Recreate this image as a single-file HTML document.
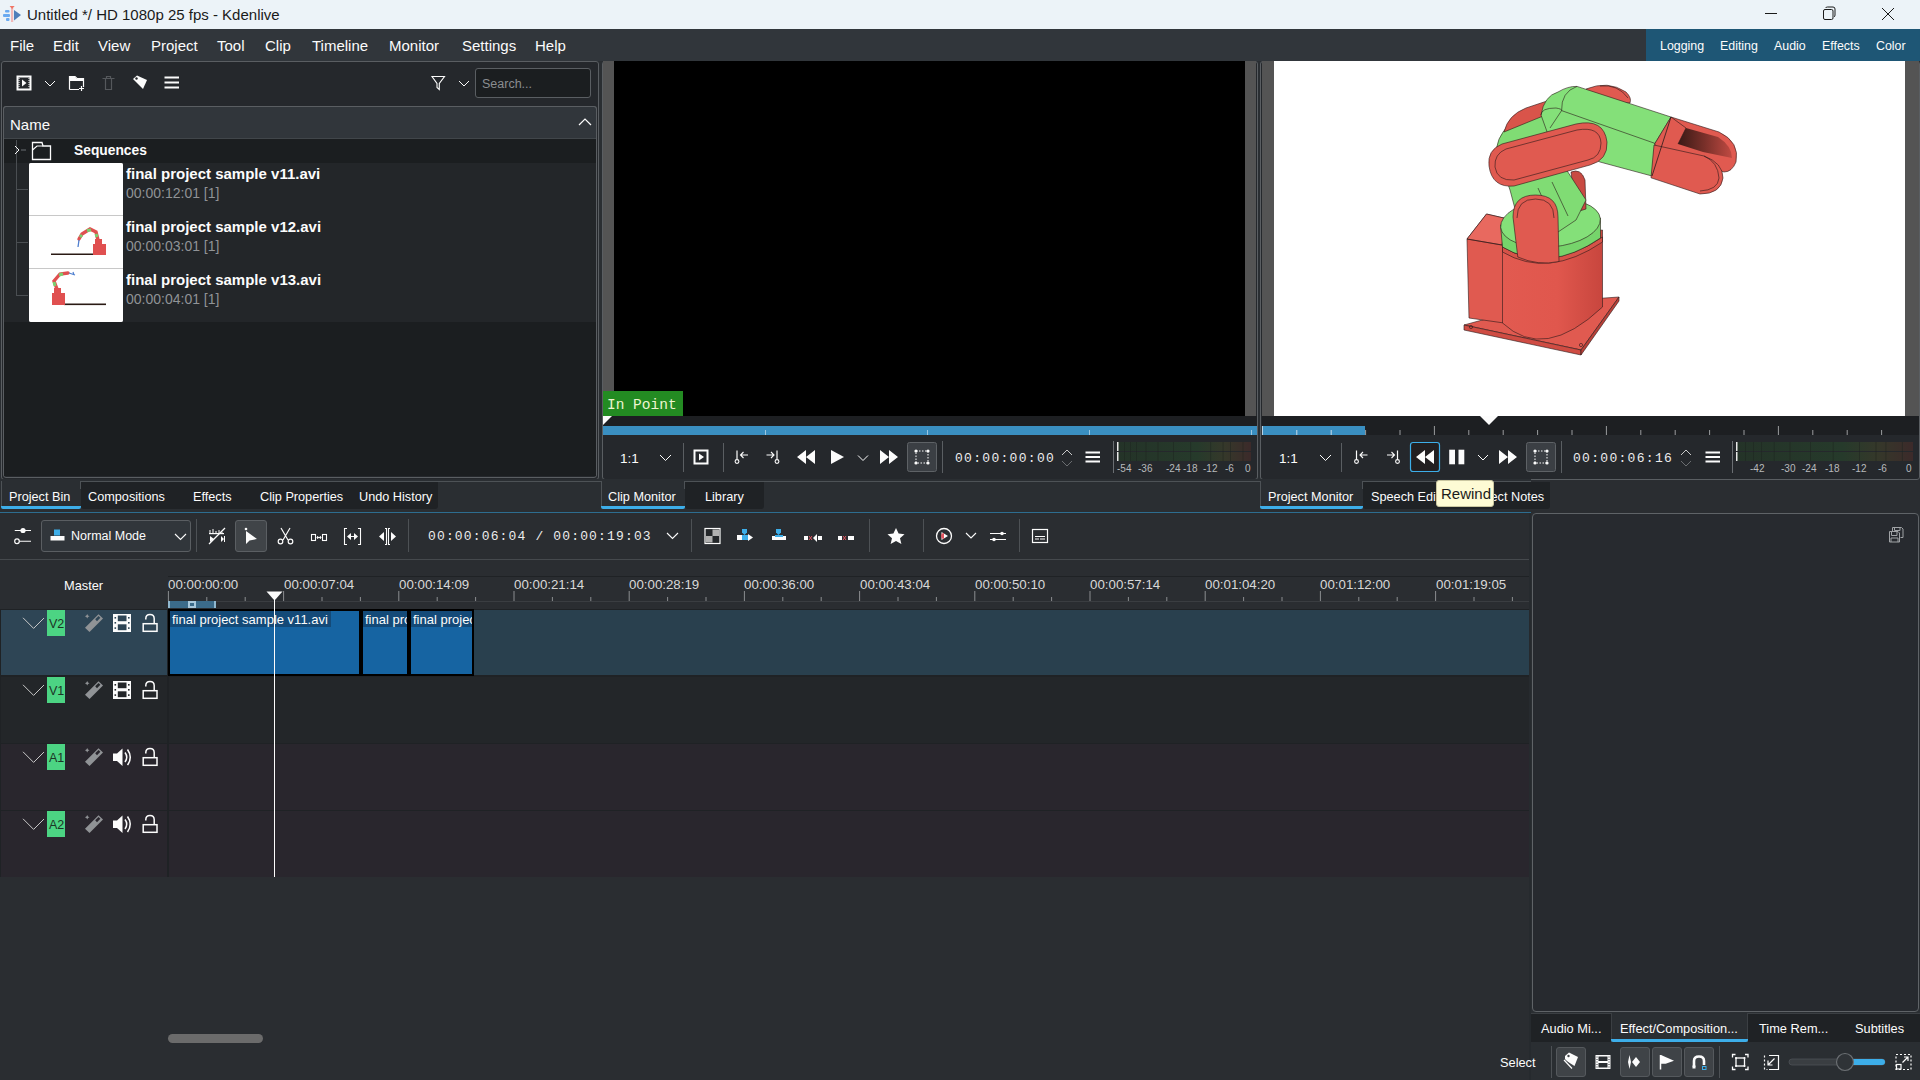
<!DOCTYPE html>
<html><head><meta charset="utf-8">
<style>
*{margin:0;padding:0;box-sizing:border-box}
html,body{width:1920px;height:1080px;overflow:hidden;background:#2a2d31;font-family:"Liberation Sans",sans-serif;color:#fcfcfc}
.a{position:absolute}
.t{position:absolute;white-space:nowrap;line-height:1}
svg{position:absolute;overflow:visible}
</style></head><body>
<div class="a" style="left:0px;top:0px;width:1920px;height:29px;background:#ecf3f8"></div>
<svg style="left:3px;top:5px;" width="20" height="19" viewBox="0 0 20 19"><rect x="2" y="5" width="4.5" height="2.6" rx="1" fill="#6aaaf0"/><rect x="0" y="9" width="7" height="3" rx="1" fill="#6aaaf0"/><rect x="3" y="13" width="3.5" height="3" rx="1" fill="#6aaaf0"/>
<path d="M11 5 L18 10 L11 15.5Z" fill="#4f7fba"/><rect x="8" y="3" width="2.2" height="14" fill="#f0b8b8"/><path d="M6.6 1 L11.6 1 L9.1 4Z" fill="#f07565"/></svg>
<div class="t" style="left:27px;top:7px;font-size:15px;color:#1a1a1a;">Untitled */ HD 1080p 25 fps - Kdenlive</div>
<svg style="left:1760px;top:0px;" width="140" height="29" viewBox="0 0 140 29"><line x1="5" y1="13.5" x2="17" y2="13.5" stroke="#1a1a1a" stroke-width="1"/>
<rect x="63.5" y="9.5" width="9.5" height="10" rx="1.5" fill="none" stroke="#1a1a1a" stroke-width="1"/>
<path d="M65.5 8 Q66 7 67.5 7 L73 7 Q75 7 75 9 L75 15 Q75 16.5 74 17" fill="none" stroke="#1a1a1a" stroke-width="1"/>
<path d="M122 8 L134 20 M134 8 L122 20" stroke="#1a1a1a" stroke-width="1"/></svg>
<div class="a" style="left:0px;top:29px;width:1920px;height:32px;background:#31363b"></div>
<div class="t" style="left:10px;top:38px;font-size:15px;color:#fcfcfc;">File</div>
<div class="t" style="left:53px;top:38px;font-size:15px;color:#fcfcfc;">Edit</div>
<div class="t" style="left:98px;top:38px;font-size:15px;color:#fcfcfc;">View</div>
<div class="t" style="left:151px;top:38px;font-size:15px;color:#fcfcfc;">Project</div>
<div class="t" style="left:217px;top:38px;font-size:15px;color:#fcfcfc;">Tool</div>
<div class="t" style="left:265px;top:38px;font-size:15px;color:#fcfcfc;">Clip</div>
<div class="t" style="left:312px;top:38px;font-size:15px;color:#fcfcfc;">Timeline</div>
<div class="t" style="left:389px;top:38px;font-size:15px;color:#fcfcfc;">Monitor</div>
<div class="t" style="left:462px;top:38px;font-size:15px;color:#fcfcfc;">Settings</div>
<div class="t" style="left:535px;top:38px;font-size:15px;color:#fcfcfc;">Help</div>
<div class="a" style="left:1646px;top:29px;width:274px;height:32px;background:#1e5675"></div>
<div class="t" style="left:1660px;top:40px;font-size:12.4px;color:#fcfcfc;">Logging</div>
<div class="t" style="left:1720px;top:40px;font-size:12.4px;color:#fcfcfc;">Editing</div>
<div class="t" style="left:1774px;top:40px;font-size:12.4px;color:#fcfcfc;">Audio</div>
<div class="t" style="left:1822px;top:40px;font-size:12.4px;color:#fcfcfc;">Effects</div>
<div class="t" style="left:1876px;top:40px;font-size:12.4px;color:#fcfcfc;">Color</div>
<div class="a" style="left:0px;top:61px;width:602px;height:418px;background:#2a2e32"></div>
<div class="a" style="left:1px;top:61px;width:598px;height:419px;background:#25282c;border:1px solid #5a5e62;border-radius:3px"></div>
<svg style="left:16px;top:75px;" width="170" height="16" viewBox="0 0 170 16">
<rect x="1.5" y="1.5" width="13" height="13" fill="none" stroke="#fcfcfc" stroke-width="2"/>
<path d="M3 3 v10 M13 3 v10" stroke="#fcfcfc" stroke-width="1" stroke-dasharray="1 1"/>
<path d="M6 4.5 L10.5 8 L6 11.5Z" fill="#fcfcfc"/>
<path d="M29 6 L34 11 L39 6" fill="none" stroke="#fcfcfc" stroke-width="1"/>
<path d="M53.5 14.5 V1.5 H59 L61 3.5 H67.5 V12" fill="none" stroke="#fcfcfc" stroke-width="1.2"/>
<path d="M53.5 5.5 H67.5 M53.5 14.5 H63" stroke="#fcfcfc" stroke-width="1.2"/><path d="M54 2 h5 l2 2 h6 v2 h-13z" fill="#fcfcfc"/>
<path d="M65.5 11 v5 M63 13.5 h5" stroke="#fcfcfc" stroke-width="1.2"/>
<path d="M86.5 3.5 H98.5 M89.5 3.5 V14.5 H95.5 V3.5 M90.5 3.5 V1.5 H94.5 V3.5" fill="none" stroke="#55585c" stroke-width="1.2"/>
<path d="M117 4 L121 0.5 L131 5 L127 14 Z" fill="#fcfcfc"/><circle cx="120.5" cy="3.5" r="1.2" fill="#232629"/><path d="M116.5 6 L124 13.5" stroke="#232629" stroke-width="1"/>
<path d="M148.5 2.5 H163 M148.5 7.5 H163 M148.5 12.5 H163" stroke="#fcfcfc" stroke-width="2"/>
</svg>
<svg style="left:430px;top:75px;" width="40" height="16" viewBox="0 0 40 16"><path d="M2 1.5 H14.5 L9.3 8.5 V14.5 L7 12.5 V8.5 Z" fill="none" stroke="#fcfcfc" stroke-width="1.1"/>
<path d="M29 6 L34 11 L39 6" fill="none" stroke="#fcfcfc" stroke-width="1"/></svg>
<div class="a" style="left:475px;top:68px;width:116px;height:30px;background:#1b1e20;border:1px solid #5a5e62;border-radius:3px"></div>
<div class="t" style="left:482px;top:78px;font-size:12.5px;color:#8a8d90;">Search...</div>
<div class="a" style="left:3px;top:106px;width:594px;height:33px;background:#31363b;border:1px solid #4d5256;border-bottom:1px solid #41464a;border-radius:3px 3px 0 0"></div>
<div class="t" style="left:10px;top:117px;font-size:15px;color:#fcfcfc;">Name</div>
<svg style="left:578px;top:117px;" width="14" height="10" viewBox="0 0 14 10"><path d="M1 8 L7 2 L13 8" fill="none" stroke="#fcfcfc" stroke-width="1.2"/></svg>
<div class="a" style="left:3px;top:106px;width:594px;height:372px;border:1px solid #5a5e62;border-radius:3px"></div>
<div class="a" style="left:4px;top:139px;width:592px;height:337px;background:#1b1e20"></div>
<div class="a" style="left:4px;top:139px;width:592px;height:24px;background:#1b1e20"></div>
<div class="a" style="left:4px;top:163px;width:592px;height:53px;background:#232629"></div>
<div class="a" style="left:4px;top:216px;width:592px;height:53px;background:#232629"></div>
<div class="a" style="left:4px;top:269px;width:592px;height:53px;background:#232629"></div>
<div class="a" style="left:16px;top:140px;width:1px;height:155px;background:#4a4e52"></div>
<div class="a" style="left:16px;top:189px;width:12px;height:1px;background:#4a4e52"></div>
<div class="a" style="left:16px;top:242px;width:12px;height:1px;background:#4a4e52"></div>
<div class="a" style="left:16px;top:295px;width:12px;height:1px;background:#4a4e52"></div>
<svg style="left:12px;top:144px;" width="60" height="18" viewBox="0 0 60 18"><path d="M3 2 L7 6 L3 10" fill="none" stroke="#fcfcfc" stroke-width="1"/>
<path d="M9 6 H14" stroke="#6b6f73" stroke-width="1"/>
<path d="M20.5 15.5 V-1.5 H30 L31 2 H38.5 V15.5 Z" fill="none" stroke="#fcfcfc" stroke-width="1.3"/>
<path d="M20.5 6 L25 2 H31" fill="none" stroke="#fcfcfc" stroke-width="1.2"/></svg>
<div class="t" style="left:74px;top:144px;font-size:13.8px;color:#fcfcfc;font-weight:bold">Sequences</div>
<div class="a" style="left:29px;top:163px;width:94px;height:159px;background:#c8c8c8;border-radius:2px"></div>
<div class="a" style="left:29px;top:163px;width:94px;height:52px;background:#ffffff;border-radius:2px 2px 0 0"></div>
<div class="a" style="left:29px;top:216px;width:94px;height:52px;background:#ffffff"></div>
<div class="a" style="left:29px;top:269px;width:94px;height:53px;background:#ffffff;border-radius:0 0 2px 2px"></div>
<svg style="left:29px;top:216px;" width="94" height="52" viewBox="0 0 94 52"><rect x="22" y="37.5" width="55" height="1.5" fill="#2a1a14"/>
<rect x="64" y="28" width="13" height="11" fill="#e05050"/><rect x="66" y="23" width="7" height="6" fill="#e05050"/>
<path d="M69 24 L67 16 L61 13 L53 18 L50 23" fill="none" stroke="#e05050" stroke-width="3.4" stroke-linecap="round"/>
<path d="M58 14.5 L62 14 M51 21 L53 19 M67 18 L68 21" stroke="#7ad070" stroke-width="3"/><path d="M50 24 L49 31" stroke="#5080d0" stroke-width="1.3"/></svg>
<svg style="left:29px;top:269px;" width="94" height="53" viewBox="0 0 94 53"><rect x="35" y="34.5" width="42" height="1.6" fill="#2a1a14"/>
<rect x="23" y="24" width="13" height="12" fill="#e05050"/><rect x="25" y="19" width="7" height="6" fill="#e05050"/>
<path d="M28 20 L25 12 L31 5 L39 4" fill="none" stroke="#e05050" stroke-width="3.4" stroke-linecap="round"/>
<path d="M25 13 L26 17 M30 6 L34 5" stroke="#7ad070" stroke-width="3"/><path d="M40 4 L46 6 M44 3 l1 3" stroke="#5080d0" stroke-width="1.2"/></svg>
<div class="t" style="left:126px;top:166px;font-size:15px;color:#fcfcfc;font-weight:bold">final project sample v11.avi</div>
<div class="t" style="left:126px;top:186px;font-size:14px;color:#909396;">00:00:12:01 [1]</div>
<div class="t" style="left:126px;top:219px;font-size:15px;color:#fcfcfc;font-weight:bold">final project sample v12.avi</div>
<div class="t" style="left:126px;top:239px;font-size:14px;color:#909396;">00:00:03:01 [1]</div>
<div class="t" style="left:126px;top:272px;font-size:15px;color:#fcfcfc;font-weight:bold">final project sample v13.avi</div>
<div class="t" style="left:126px;top:292px;font-size:14px;color:#909396;">00:00:04:01 [1]</div>
<div class="a" style="left:600px;top:61px;width:660px;height:418px;background:#2a2e32"></div>
<div class="a" style="left:602px;top:61px;width:656px;height:419px;background:#25282c;border:1px solid #5a5e62;border-radius:3px"></div>
<div class="a" style="left:603px;top:61px;width:653px;height:355px;background:#545454"></div>
<div class="a" style="left:614px;top:61px;width:631px;height:355px;background:#000"></div>
<div class="a" style="left:603px;top:391px;width:80px;height:25px;background:#238b22"></div>
<div class="t" style="left:607px;top:397.5px;font-size:14.5px;color:#eef5d0;font-family:'Liberation Mono',monospace">In Point</div>
<div class="a" style="left:603px;top:416px;width:654px;height:10px;background:#1d1f22"></div>
<svg style="left:603px;top:416px;" width="10" height="10" viewBox="0 0 10 10"><path d="M0 0 H9 L0 9Z" fill="#fcfcfc"/></svg>
<div class="a" style="left:603px;top:426px;width:654px;height:9px;background:#3a8fc1"></div>
<svg style="left:603px;top:426px;" width="654" height="9" viewBox="0 0 654 9"><line x1="162.5" y1="4" x2="162.5" y2="9" stroke="#9cc6e0" stroke-width="1"/><line x1="324.5" y1="4" x2="324.5" y2="9" stroke="#9cc6e0" stroke-width="1"/><line x1="486.5" y1="4" x2="486.5" y2="9" stroke="#9cc6e0" stroke-width="1"/><line x1="648.5" y1="4" x2="648.5" y2="9" stroke="#9cc6e0" stroke-width="1"/></svg>
<div class="t" style="left:620px;top:452px;font-size:13.5px;color:#fcfcfc;">1:1</div>
<svg style="left:600px;top:440px;" width="660" height="36" viewBox="0 0 660 36">
<path d="M60 15 L65.5 20.5 L71 15" fill="none" stroke="#fcfcfc" stroke-width="1"/>
<line x1="83.5" y1="3" x2="83.5" y2="32" stroke="#5a5e62"/>
<rect x="94.5" y="10.5" width="13" height="13" fill="none" stroke="#fcfcfc" stroke-width="2"/><path d="M99 13.5 L104 17 L99 20.5Z" fill="#fcfcfc"/>
<line x1="123.5" y1="3" x2="123.5" y2="32" stroke="#5a5e62"/>
<path d="M137 10.5 V19.5" stroke="#fcfcfc" stroke-width="1.2"/><circle cx="137" cy="21.5" r="1.9" fill="none" stroke="#fcfcfc" stroke-width="1.1"/><path d="M140.5 15 H148 M143.5 12 L140.5 15 L143.5 18" fill="none" stroke="#fcfcfc" stroke-width="1.1"/>
<path d="M177 10.5 V19.5" stroke="#fcfcfc" stroke-width="1.2"/><circle cx="177" cy="21.5" r="1.9" fill="none" stroke="#fcfcfc" stroke-width="1.1"/><path d="M166.5 15 H174 M171 12 L174 15 L171 18" fill="none" stroke="#fcfcfc" stroke-width="1.1"/>
<path d="M197 17 L206 10 V24Z M206 17 L215 10 V24Z" fill="#fcfcfc"/>
<path d="M231 10 L244 17 L231 24Z" fill="#fcfcfc"/>
<path d="M258 15.5 L263 20.5 L268 15.5" fill="none" stroke="#fcfcfc" stroke-width="1"/>
<path d="M280 10 L289 17 L280 24Z M289 10 L298 17 L289 24Z" fill="#fcfcfc"/>
<rect x="307.5" y="2.5" width="29" height="29" rx="2" fill="#3b3f44" stroke="#5e6266"/>
<rect x="316" y="11" width="12" height="12" fill="none" stroke="#fcfcfc" stroke-width="1" stroke-dasharray="1.5 1.5"/>
<circle cx="316" cy="11" r="1.6" fill="#fcfcfc"/><circle cx="328" cy="11" r="1.6" fill="#fcfcfc"/><circle cx="316" cy="23" r="1.6" fill="#fcfcfc"/><circle cx="328" cy="23" r="1.6" fill="#fcfcfc"/>
<line x1="342.5" y1="1" x2="342.5" y2="33" stroke="#5a5e62"/>
<path d="M462 15 L467 10 L472 15" fill="none" stroke="#c8c8c8" stroke-width="1"/><path d="M462 21 L467 26 L472 21" fill="none" stroke="#6a6d70" stroke-width="1"/>
<path d="M485.5 12.5 H500 M485.5 17 H500 M485.5 21.5 H500" stroke="#fcfcfc" stroke-width="2"/>
<line x1="513.5" y1="1" x2="513.5" y2="33" stroke="#6a6e72"/>
</svg>
<div class="t" style="left:955px;top:452px;font-size:13px;color:#ececec;font-family:'Liberation Mono',monospace;letter-spacing:1.3px">00:00:00:00</div>
<svg style="left:1117px;top:442px;" width="134" height="30" viewBox="0 0 134 30"><defs><linearGradient id="mg1117" x1="0" x2="1"><stop offset="0" stop-color="#243328"/><stop offset="0.6" stop-color="#263a2b"/><stop offset="0.8" stop-color="#35382a"/><stop offset="1" stop-color="#3c2a2a"/></linearGradient></defs>
<rect x="0" y="0" width="134" height="9" fill="url(#mg1117)"/><rect x="0" y="10" width="134" height="9" fill="url(#mg1117)"/>
<rect x="0" y="0" width="1.5" height="9" fill="#e8e8e8"/><rect x="0" y="10" width="1.5" height="9" fill="#e8e8e8"/><rect x="7.0" y="0" width="0.8" height="19" fill="#1e2420" opacity="0.6"/><rect x="13.0" y="0" width="0.8" height="19" fill="#1e2420" opacity="0.6"/><rect x="19.0" y="0" width="0.8" height="19" fill="#1e2420" opacity="0.6"/><rect x="28.6" y="0" width="0.8" height="19" fill="#1e2420" opacity="0.6"/><rect x="40.6" y="0" width="0.8" height="19" fill="#1e2420" opacity="0.6"/><rect x="56.0" y="0" width="0.8" height="19" fill="#1e2420" opacity="0.6"/><rect x="73.3" y="0" width="0.8" height="19" fill="#1e2420" opacity="0.6"/><rect x="93.3" y="0" width="0.8" height="19" fill="#1e2420" opacity="0.6"/><rect x="105.7" y="0" width="0.8" height="19" fill="#1e2420" opacity="0.6"/><rect x="113.2" y="0" width="0.8" height="19" fill="#1e2420" opacity="0.6"/><rect x="125.6" y="0" width="0.8" height="19" fill="#1e2420" opacity="0.6"/></svg>
<div class="t" style="left:1117px;top:463.5px;font-size:10px;color:#b8babc;">-54</div>
<div class="t" style="left:1138px;top:463.5px;font-size:10px;color:#b8babc;">-36</div>
<div class="t" style="left:1166px;top:463.5px;font-size:10px;color:#b8babc;">-24</div>
<div class="t" style="left:1183px;top:463.5px;font-size:10px;color:#b8babc;">-18</div>
<div class="t" style="left:1203px;top:463.5px;font-size:10px;color:#b8babc;">-12</div>
<div class="t" style="left:1225px;top:463.5px;font-size:10px;color:#b8babc;">-6</div>
<div class="t" style="left:1245px;top:463.5px;font-size:10px;color:#b8babc;">0</div>
<div class="a" style="left:1258px;top:61px;width:662px;height:418px;background:#2a2e32"></div>
<div class="a" style="left:1260px;top:61px;width:660px;height:419px;background:#25282c;border:1px solid #5a5e62;border-radius:3px"></div>
<div class="a" style="left:1262px;top:61px;width:657px;height:355px;background:#545454"></div>
<div class="a" style="left:1274px;top:61px;width:631px;height:355px;background:#ffffff"></div>
<div class="a" style="left:1262px;top:416px;width:657px;height:19px;background:#1d1f22"></div>
<div class="a" style="left:1262px;top:426px;width:103px;height:9px;background:#3a8fc1"></div>
<svg style="left:1262px;top:416px;" width="657" height="19" viewBox="0 0 657 19"><line x1="0.4" y1="10" x2="0.4" y2="19" stroke="#c8dbe8" stroke-width="1"/><line x1="34.8" y1="14" x2="34.8" y2="19" stroke="#c8dbe8" stroke-width="1"/><line x1="69.2" y1="14" x2="69.2" y2="19" stroke="#c8dbe8" stroke-width="1"/><line x1="103.6" y1="14" x2="103.6" y2="19" stroke="#9a9c9e" stroke-width="1"/><line x1="138.0" y1="14" x2="138.0" y2="19" stroke="#9a9c9e" stroke-width="1"/><line x1="172.4" y1="10" x2="172.4" y2="19" stroke="#9a9c9e" stroke-width="1"/><line x1="206.8" y1="14" x2="206.8" y2="19" stroke="#9a9c9e" stroke-width="1"/><line x1="241.2" y1="14" x2="241.2" y2="19" stroke="#9a9c9e" stroke-width="1"/><line x1="275.6" y1="14" x2="275.6" y2="19" stroke="#9a9c9e" stroke-width="1"/><line x1="310.0" y1="14" x2="310.0" y2="19" stroke="#9a9c9e" stroke-width="1"/><line x1="344.4" y1="10" x2="344.4" y2="19" stroke="#9a9c9e" stroke-width="1"/><line x1="378.8" y1="14" x2="378.8" y2="19" stroke="#9a9c9e" stroke-width="1"/><line x1="413.2" y1="14" x2="413.2" y2="19" stroke="#9a9c9e" stroke-width="1"/><line x1="447.6" y1="14" x2="447.6" y2="19" stroke="#9a9c9e" stroke-width="1"/><line x1="482.0" y1="14" x2="482.0" y2="19" stroke="#9a9c9e" stroke-width="1"/><line x1="516.4" y1="10" x2="516.4" y2="19" stroke="#9a9c9e" stroke-width="1"/><line x1="550.8" y1="14" x2="550.8" y2="19" stroke="#9a9c9e" stroke-width="1"/><line x1="585.2" y1="14" x2="585.2" y2="19" stroke="#9a9c9e" stroke-width="1"/><line x1="619.6" y1="14" x2="619.6" y2="19" stroke="#9a9c9e" stroke-width="1"/><path d="M218 0 H236 L227 9Z" fill="#fcfcfc"/></svg>
<div class="t" style="left:1279px;top:452px;font-size:13.5px;color:#fcfcfc;">1:1</div>
<svg style="left:1260px;top:440px;" width="660" height="36" viewBox="0 0 660 36">
<path d="M60 15 L65.5 20.5 L71 15" fill="none" stroke="#fcfcfc" stroke-width="1"/>
<line x1="81.5" y1="3" x2="81.5" y2="32" stroke="#5a5e62"/>
<path d="M96.5 10.5 V19.5" stroke="#fcfcfc" stroke-width="1.2"/><circle cx="96.5" cy="21.5" r="1.9" fill="none" stroke="#fcfcfc" stroke-width="1.1"/><path d="M100 15 H107.5 M103 12 L100 15 L103 18" fill="none" stroke="#fcfcfc" stroke-width="1.1"/>
<path d="M137.5 10.5 V19.5" stroke="#fcfcfc" stroke-width="1.2"/><circle cx="137.5" cy="21.5" r="1.9" fill="none" stroke="#fcfcfc" stroke-width="1.1"/><path d="M127 15 H134.5 M131.5 12 L134.5 15 L131.5 18" fill="none" stroke="#fcfcfc" stroke-width="1.1"/>
<rect x="150.5" y="2.5" width="29" height="29" rx="2.5" fill="#221f21" stroke="#3daee9" stroke-width="1.2"/>
<path d="M156 17 L165 10 V24Z M165 17 L174 10 V24Z" fill="#fcfcfc"/>
<rect x="189.2" y="9.7" width="5.8" height="14.6" fill="#fcfcfc"/><rect x="198.5" y="9.7" width="5.8" height="14.6" fill="#fcfcfc"/>
<path d="M218 15 L223 20 L228 15" fill="none" stroke="#fcfcfc" stroke-width="1"/>
<path d="M239 10 L248 17 L239 24Z M248 10 L257 17 L248 24Z" fill="#fcfcfc"/>
<rect x="266.5" y="2.5" width="29" height="29" rx="2" fill="#3b3f44" stroke="#5e6266"/>
<rect x="275" y="11" width="12" height="12" fill="none" stroke="#fcfcfc" stroke-width="1" stroke-dasharray="1.5 1.5"/>
<circle cx="275" cy="11" r="1.6" fill="#fcfcfc"/><circle cx="287" cy="11" r="1.6" fill="#fcfcfc"/><circle cx="275" cy="23" r="1.6" fill="#fcfcfc"/><circle cx="287" cy="23" r="1.6" fill="#fcfcfc"/>
<line x1="301.5" y1="1" x2="301.5" y2="33" stroke="#5a5e62"/>
<path d="M421 15 L426 10 L431 15" fill="none" stroke="#c8c8c8" stroke-width="1"/><path d="M421 21 L426 26 L431 21" fill="none" stroke="#6a6d70" stroke-width="1"/>
<path d="M445.5 12.5 H460 M445.5 17 H460 M445.5 21.5 H460" stroke="#fcfcfc" stroke-width="2"/>
<line x1="472.5" y1="1" x2="472.5" y2="33" stroke="#6a6e72"/>
</svg>
<div class="t" style="left:1573px;top:452px;font-size:13px;color:#ececec;font-family:'Liberation Mono',monospace;letter-spacing:1.3px">00:00:06:16</div>
<svg style="left:1736px;top:442px;" width="177" height="30" viewBox="0 0 177 30"><defs><linearGradient id="mg1736" x1="0" x2="1"><stop offset="0" stop-color="#243328"/><stop offset="0.6" stop-color="#263a2b"/><stop offset="0.8" stop-color="#35382a"/><stop offset="1" stop-color="#3c2a2a"/></linearGradient></defs>
<rect x="0" y="0" width="177" height="9" fill="url(#mg1736)"/><rect x="0" y="10" width="177" height="9" fill="url(#mg1736)"/>
<rect x="0" y="0" width="1.5" height="9" fill="#e8e8e8"/><rect x="0" y="10" width="1.5" height="9" fill="#e8e8e8"/><rect x="9.2" y="0" width="0.8" height="19" fill="#1e2420" opacity="0.6"/><rect x="17.2" y="0" width="0.8" height="19" fill="#1e2420" opacity="0.6"/><rect x="25.1" y="0" width="0.8" height="19" fill="#1e2420" opacity="0.6"/><rect x="37.8" y="0" width="0.8" height="19" fill="#1e2420" opacity="0.6"/><rect x="53.6" y="0" width="0.8" height="19" fill="#1e2420" opacity="0.6"/><rect x="74.0" y="0" width="0.8" height="19" fill="#1e2420" opacity="0.6"/><rect x="96.8" y="0" width="0.8" height="19" fill="#1e2420" opacity="0.6"/><rect x="123.2" y="0" width="0.8" height="19" fill="#1e2420" opacity="0.6"/><rect x="139.6" y="0" width="0.8" height="19" fill="#1e2420" opacity="0.6"/><rect x="149.5" y="0" width="0.8" height="19" fill="#1e2420" opacity="0.6"/><rect x="165.9" y="0" width="0.8" height="19" fill="#1e2420" opacity="0.6"/></svg>
<div class="t" style="left:1750px;top:463.5px;font-size:10px;color:#b8babc;">-42</div>
<div class="t" style="left:1781px;top:463.5px;font-size:10px;color:#b8babc;">-30</div>
<div class="t" style="left:1802px;top:463.5px;font-size:10px;color:#b8babc;">-24</div>
<div class="t" style="left:1825px;top:463.5px;font-size:10px;color:#b8babc;">-18</div>
<div class="t" style="left:1852px;top:463.5px;font-size:10px;color:#b8babc;">-12</div>
<div class="t" style="left:1878px;top:463.5px;font-size:10px;color:#b8babc;">-6</div>
<div class="t" style="left:1906px;top:463.5px;font-size:10px;color:#b8babc;">0</div>
<svg style="left:1440px;top:70px;" width="320" height="300" viewBox="0 0 320 300">
<defs>
<linearGradient id="cylg" x1="0" x2="1"><stop offset="0" stop-color="#e25a50"/><stop offset="0.55" stop-color="#e0574d"/><stop offset="1" stop-color="#c8463e"/></linearGradient>
<linearGradient id="grg" x1="0" x2="1"><stop offset="0" stop-color="#7fdc74"/><stop offset="1" stop-color="#86e27b"/></linearGradient>
<linearGradient id="cav" x1="0" x2="1"><stop offset="0" stop-color="#3a1a16"/><stop offset="0.5" stop-color="#7a302a"/><stop offset="1" stop-color="#c04a42"/></linearGradient>
</defs>
<g stroke="#2a1a1a" stroke-width="0.6" stroke-linejoin="round">
<!-- base plate -->
<path d="M24 255 L108 232 L179 227 L141 280 Z" fill="#e05a50"/>
<path d="M24 255 L141 280 L141 285 L24 260Z" fill="#cf4c43"/>
<path d="M141 280 L179 227 L179 231 L141 285Z" fill="#b94038"/>
<circle cx="31" cy="257" r="1.6" fill="none"/><circle cx="141" cy="275" r="1.6" fill="none"/>
<!-- left box -->
<path d="M27 169 L46.5 144 L66 148.5 L64 253 L29 248Z" fill="#e05a50"/>
<path d="M27 169 L46.5 144 L66 148.5 L62 175Z" fill="#e8695f"/>
<path d="M27 169 L62 175" fill="none"/>
<!-- cylinder -->
<path d="M62.5 170 L62.5 253 Q104 292 162.5 237 L162.5 160 Z" fill="url(#cylg)"/>
<path d="M62.5 177 Q108 204 162.5 167 L162.5 172 Q108 209 62.5 182Z" fill="#d65248"/>
<!-- green turntable -->
<path d="M60.5 155 L62.5 177 Q108 204 160.5 168 L160.5 148 Z" fill="#76d46b"/>
<ellipse cx="110.5" cy="153" rx="50" ry="24" transform="rotate(-5 110.5 153)" fill="#84e079"/>
<!-- red back lower link -->
<path d="M131 102 Q141 98 145 110 L146 139 L136 142 Z" fill="#c94a42"/>
<!-- green lower arm -->
<path d="M56 80 Q60 56 80 50 L108 42 L124 96 L146 130 L136 150 L118 162 L82 165 L70 120Z" fill="#80dc74"/>
<path d="M98 118 L114 154 M112 112 L128 146" fill="none"/>
<!-- red front lower link -->
<path d="M73 147 Q73 125 95.5 125 Q118 125 118 147 L119 191.5 Q98 196 77.8 187 Z" fill="#e05a50"/>
<path d="M77 148 Q77 129 95.5 129 Q114 129 114 148" fill="none"/>
<!-- red back top-left link strip -->
<path d="M64 62 Q68 45 86 38 L110 30 Q119 28 117 36 L108 44 Z" fill="#d9544a"/>
<!-- red back shoulder -->
<path d="M146 19 Q168 10 186 22 Q192 28 190 33 L150 30Z" fill="#e05a50"/>
<path d="M160 16 Q178 14 188 28" fill="none"/>
<!-- green upper arm box -->
<path d="M101 45 Q104 26 118 22 Q128 16 137 16.4 L231 47 L215 73.4 L212 106 L160 92 L110 70 Z" fill="#84e079"/>
<path d="M121.6 40.6 L215 73.4" fill="none"/><path d="M137 16.4 Q121 22 121.6 40.6 L110 58" fill="none"/>
<path d="M101 45 Q101 38 116 38 Q122 39 121.6 40.6" fill="none"/>
<!-- gripper back finger -->
<path d="M231 47 L279 62 Q300 72 296 92 Q292 102 284 102 L215 80 L215 73.4 Z" fill="#e05a50"/>
<path d="M246 58 L278 67 Q292 76 292 88 L263 82 L238 74Z" fill="url(#cav)" stroke="none"/>
<path d="M231 47 L246 58 L238 74" fill="none"/>
<!-- gripper front finger -->
<path d="M214 75 L264 86 Q283 93 283 108 Q281 124 260 124 L211 107.8 Z" fill="#e05a50"/>
<path d="M264 86 Q278 92 279 108 Q278 120 260 121" fill="none"/>
<path d="M212 106 L231 47" fill="none" stroke-width="0.8"/>
<!-- red front capsule (upper link) -->
<path d="M49 96 Q47 80 62 74 L136 54 Q164 48 167 72 Q168 90 150 95 L74 116 Q52 118 49 96Z" fill="#e05a50"/>
<path d="M55 97 Q54 84 66 79 L137 60 Q160 56 161 73 Q161 87 148 90 L74 110 Q57 111 55 97Z" fill="none"/>
</g></svg>
<div class="a" style="left:0px;top:479px;width:1531px;height:34px;background:#2a2e32"></div>
<div class="a" style="left:80px;top:481px;width:521px;height:1px;background:#4d5256"></div>
<div class="a" style="left:1px;top:481px;width:1px;height:26px;background:#4d5256"></div>
<div class="a" style="left:80px;top:481px;width:1px;height:8px;background:#4d5256"></div>
<div class="a" style="left:81px;top:482px;width:357px;height:27px;background:#1f2225;border-radius:0 0 3px 3px"></div>
<div class="a" style="left:1px;top:506px;width:80px;height:3px;background:#3daee9;border-radius:0 0 2px 2px"></div>
<div class="t" style="left:9px;top:491px;font-size:12.7px;color:#fcfcfc;">Project Bin</div>
<div class="t" style="left:88px;top:491px;font-size:12.7px;color:#fcfcfc;">Compositions</div>
<div class="t" style="left:193px;top:491px;font-size:12.7px;color:#fcfcfc;">Effects</div>
<div class="t" style="left:260px;top:491px;font-size:12.7px;color:#fcfcfc;">Clip Properties</div>
<div class="t" style="left:359px;top:491px;font-size:12.7px;color:#fcfcfc;">Undo History</div>
<div class="a" style="left:684px;top:481px;width:576px;height:1px;background:#4d5256"></div>
<div class="a" style="left:601px;top:481px;width:1px;height:26px;background:#4d5256"></div>
<div class="a" style="left:684px;top:481px;width:1px;height:8px;background:#4d5256"></div>
<div class="a" style="left:685px;top:482px;width:79px;height:27px;background:#1f2225;border-radius:0 0 3px 3px"></div>
<div class="a" style="left:601px;top:506px;width:84px;height:3px;background:#3daee9;border-radius:0 0 2px 2px"></div>
<div class="t" style="left:608px;top:491px;font-size:12.7px;color:#fcfcfc;">Clip Monitor</div>
<div class="t" style="left:705px;top:491px;font-size:12.7px;color:#fcfcfc;">Library</div>
<div class="a" style="left:1362px;top:481px;width:169px;height:1px;background:#4d5256"></div>
<div class="a" style="left:1260px;top:481px;width:1px;height:26px;background:#4d5256"></div>
<div class="a" style="left:1362px;top:481px;width:1px;height:8px;background:#4d5256"></div>
<div class="a" style="left:1363px;top:482px;width:187px;height:27px;background:#1f2225;border-radius:0 0 3px 3px"></div>
<div class="a" style="left:1260px;top:506px;width:103px;height:3px;background:#3daee9;border-radius:0 0 2px 2px"></div>
<div class="t" style="left:1268px;top:491px;font-size:12.7px;color:#fcfcfc;">Project Monitor</div>
<div class="t" style="left:1371px;top:491px;font-size:12.7px;color:#fcfcfc;">Speech Editor</div>
<div class="t" style="left:1468px;top:491px;font-size:12.7px;color:#fcfcfc;">Project Notes</div>
<div class="a" style="left:0px;top:512px;width:1531px;height:1px;background:#2d6d90"></div>
<div class="a" style="left:0px;top:513px;width:1531px;height:567px;background:#2a2d31"></div>
<div class="a" style="left:0px;top:559px;width:1531px;height:1px;background:#45494d"></div>
<svg style="left:12px;top:525px;" width="24" height="22" viewBox="0 0 24 22"><path d="M2.75 5.5 H19 M2.75 16.25 H19" stroke="#fcfcfc" stroke-width="1.2"/><circle cx="11" cy="5.5" r="2.6" fill="#fcfcfc"/><circle cx="5" cy="16.25" r="2.3" fill="#2a2d31" stroke="#fcfcfc" stroke-width="1.2"/></svg>
<div class="a" style="left:41px;top:520px;width:150px;height:32px;background:#31363b;border:1px solid #5a5e62;border-radius:3px"></div>
<svg style="left:50px;top:529px;" width="18" height="16" viewBox="0 0 18 16"><rect x="4" y="0.5" width="6" height="6" fill="#3daee9"/><rect x="0.5" y="7" width="14" height="4.5" fill="#fcfcfc"/></svg>
<div class="t" style="left:71px;top:530px;font-size:12.5px;color:#fcfcfc;">Normal Mode</div>
<svg style="left:174px;top:532px;" width="14" height="10" viewBox="0 0 14 10"><path d="M1 2 L6.5 7.5 L12 2" fill="none" stroke="#fcfcfc" stroke-width="1.1"/></svg>
<div class="a" style="left:196px;top:519px;width:1px;height:33px;background:#4d5155"></div>
<div class="a" style="left:235px;top:520px;width:32px;height:32px;background:#404448;border:1px solid #5b5f63;border-radius:3px"></div>
<svg style="left:200px;top:520px;" width="220" height="34" viewBox="0 0 220 34">
<g fill="#fcfcfc" stroke="none">
<path d="M10 14 v-4 M13 14 v-5 M16 14 v-3 M19 14 v-4 M22 14 v-2" stroke="#fcfcfc" stroke-width="1"/>
<rect x="9" y="13" width="15" height="1.2"/>
<path d="M10 16 v6 l4 -3z M21 16 v6 l3 -3z M24 16 v6 h1 v-6z"/>
</g>
<path d="M9 24 L25 8" stroke="#fcfcfc" stroke-width="1.3"/>
<circle cx="46" cy="9" r="1.3" fill="#fcfcfc"/>
<path d="M46 11 V24 L49.5 20.5 L57 19 Z" fill="#fcfcfc"/>
<path d="M81 8 L88 20 M90 8 L83 20" stroke="#fcfcfc" stroke-width="1.2"/>
<circle cx="80.5" cy="21.5" r="2.3" fill="none" stroke="#fcfcfc" stroke-width="1.2"/><circle cx="90.5" cy="21.5" r="2.3" fill="none" stroke="#fcfcfc" stroke-width="1.2"/>
<rect x="111.5" y="14.5" width="4" height="6" fill="none" stroke="#fcfcfc" stroke-width="1.1"/><rect x="122.5" y="14.5" width="4" height="6" fill="none" stroke="#fcfcfc" stroke-width="1.1"/><path d="M117 17.5 h4 M118 16 l-1 1.5 l1 1.5 M120 16 l1 1.5 l-1 1.5" stroke="#fcfcfc" stroke-width="1"/>
<path d="M147 8.5 h-2.5 v16 h2.5 M158 8.5 h2.5 v16 h-2.5" fill="none" stroke="#fcfcfc" stroke-width="1.1"/>
<path d="M147 16.5 L151 13 V20Z M158 16.5 L154 13 V20Z" fill="#fcfcfc"/><path d="M150 16.5 h5" stroke="#fcfcfc" stroke-width="1"/>
<path d="M185 8.5 h1.5 v16 h-1.5 M190 8.5 h-1.5 v16 h1.5" fill="none" stroke="#fcfcfc" stroke-width="1.1"/>
<path d="M179 16.5 L184 12 V21Z M196 16.5 L191 12 V21Z" fill="#fcfcfc"/>
</g></svg>
<div class="a" style="left:408px;top:519px;width:1px;height:33px;background:#4d5155"></div>
<div class="t" style="left:428px;top:530px;font-size:13px;color:#ececec;font-family:'Liberation Mono',monospace;letter-spacing:1.15px">00:00:06:04 / 00:00:19:03</div>
<svg style="left:666px;top:531px;" width="14" height="10" viewBox="0 0 14 10"><path d="M1 2 L6.5 7.5 L12 2" fill="none" stroke="#fcfcfc" stroke-width="1.1"/></svg>
<div class="a" style="left:691px;top:519px;width:1px;height:33px;background:#4d5155"></div>
<svg style="left:700px;top:520px;" width="360" height="34" viewBox="0 0 360 34">
<rect x="5" y="8.5" width="15" height="15" fill="#232629" stroke="#fcfcfc" stroke-width="1.2"/>
<rect x="12.5" y="9.5" width="6.5" height="6.5" fill="#b0b0b0"/><rect x="6" y="16" width="6.5" height="6.5" fill="#b0b0b0"/>
<rect x="42" y="9" width="5" height="4" fill="#3daee9"/><path d="M42.5 13 l2 2 l2-2z" fill="#3daee9"/>
<rect x="37" y="15" width="5" height="5" fill="#fcfcfc"/><rect x="42" y="15" width="6" height="5" fill="#3daee9"/><path d="M48 14 L53 17.5 L48 21Z" fill="#fcfcfc"/>
<rect x="76" y="9" width="5" height="4" fill="#3daee9"/><path d="M76.5 13 l2 2 l2-2z" fill="#3daee9"/>
<rect x="72" y="16" width="14" height="4" fill="#fcfcfc"/><rect x="75" y="15" width="8" height="2" fill="#3daee9"/>
<rect x="104" y="16" width="4" height="4" fill="#fcfcfc"/><path d="M109 16 l3 4 M112 16 l-3 4" stroke="#e05560" stroke-width="1"/><rect x="118" y="16" width="4" height="4" fill="#fcfcfc"/><path d="M117 14 L113 18 L117 22Z" fill="#fcfcfc"/>
<rect x="138" y="16" width="4" height="4" fill="#fcfcfc"/><path d="M143 16 l3 4 M146 16 l-3 4" stroke="#e05560" stroke-width="1"/><rect x="148" y="16" width="6" height="4" fill="#fcfcfc"/>
<path d="M196 8 L198.6 13.6 L204.5 14.2 L200 18.2 L201.4 24 L196 21 L190.6 24 L192 18.2 L187.5 14.2 L193.4 13.6Z" fill="#fcfcfc"/>
<circle cx="244" cy="16" r="7.5" fill="none" stroke="#fcfcfc" stroke-width="1.3"/><path d="M241.5 12 L248 16 L241.5 20Z" fill="#fcfcfc"/><path d="M244 13 A3 3 0 0 0 244 19Z" fill="#e05560"/>
<path d="M266 13 L271 18 L276 13" fill="none" stroke="#fcfcfc" stroke-width="1.1"/>
<path d="M290 13.5 H306 M290 19.5 H306" stroke="#fcfcfc" stroke-width="1.2"/><circle cx="302" cy="13.5" r="1.8" fill="#fcfcfc"/><circle cx="294" cy="19.5" r="1.8" fill="#fcfcfc"/>
<rect x="332.5" y="9.5" width="15" height="13" fill="none" stroke="#fcfcfc" stroke-width="1.2"/><path d="M335 16.5 h10 M335 19 h4 M340 19 h5" stroke="#fcfcfc" stroke-width="1"/>
</svg>
<div class="a" style="left:869px;top:519px;width:1px;height:33px;background:#4d5155"></div>
<div class="a" style="left:923px;top:519px;width:1px;height:33px;background:#4d5155"></div>
<div class="a" style="left:1019px;top:519px;width:1px;height:33px;background:#4d5155"></div>
<div class="t" style="left:64px;top:580px;font-size:12.8px;color:#fcfcfc;">Master</div>
<div class="a" style="left:168px;top:576px;width:1362px;height:1px;background:#1f2225"></div>
<svg style="left:168px;top:576px;" width="1362" height="34" viewBox="0 0 1362 34"><line x1="0.4" y1="15" x2="0.4" y2="25" stroke="#8a8d90" stroke-width="1"/><line x1="38.8" y1="21" x2="38.8" y2="25" stroke="#8a8d90" stroke-width="1"/><line x1="77.2" y1="21" x2="77.2" y2="25" stroke="#8a8d90" stroke-width="1"/><line x1="115.6" y1="15" x2="115.6" y2="25" stroke="#8a8d90" stroke-width="1"/><line x1="154.0" y1="21" x2="154.0" y2="25" stroke="#8a8d90" stroke-width="1"/><line x1="192.4" y1="21" x2="192.4" y2="25" stroke="#8a8d90" stroke-width="1"/><line x1="230.8" y1="15" x2="230.8" y2="25" stroke="#8a8d90" stroke-width="1"/><line x1="269.2" y1="21" x2="269.2" y2="25" stroke="#8a8d90" stroke-width="1"/><line x1="307.6" y1="21" x2="307.6" y2="25" stroke="#8a8d90" stroke-width="1"/><line x1="346.0" y1="15" x2="346.0" y2="25" stroke="#8a8d90" stroke-width="1"/><line x1="384.4" y1="21" x2="384.4" y2="25" stroke="#8a8d90" stroke-width="1"/><line x1="422.8" y1="21" x2="422.8" y2="25" stroke="#8a8d90" stroke-width="1"/><line x1="461.2" y1="15" x2="461.2" y2="25" stroke="#8a8d90" stroke-width="1"/><line x1="499.6" y1="21" x2="499.6" y2="25" stroke="#8a8d90" stroke-width="1"/><line x1="538.0" y1="21" x2="538.0" y2="25" stroke="#8a8d90" stroke-width="1"/><line x1="576.4" y1="15" x2="576.4" y2="25" stroke="#8a8d90" stroke-width="1"/><line x1="614.8" y1="21" x2="614.8" y2="25" stroke="#8a8d90" stroke-width="1"/><line x1="653.2" y1="21" x2="653.2" y2="25" stroke="#8a8d90" stroke-width="1"/><line x1="691.6" y1="15" x2="691.6" y2="25" stroke="#8a8d90" stroke-width="1"/><line x1="730.0" y1="21" x2="730.0" y2="25" stroke="#8a8d90" stroke-width="1"/><line x1="768.4" y1="21" x2="768.4" y2="25" stroke="#8a8d90" stroke-width="1"/><line x1="806.8" y1="15" x2="806.8" y2="25" stroke="#8a8d90" stroke-width="1"/><line x1="845.2" y1="21" x2="845.2" y2="25" stroke="#8a8d90" stroke-width="1"/><line x1="883.6" y1="21" x2="883.6" y2="25" stroke="#8a8d90" stroke-width="1"/><line x1="922.0" y1="15" x2="922.0" y2="25" stroke="#8a8d90" stroke-width="1"/><line x1="960.4" y1="21" x2="960.4" y2="25" stroke="#8a8d90" stroke-width="1"/><line x1="998.8" y1="21" x2="998.8" y2="25" stroke="#8a8d90" stroke-width="1"/><line x1="1037.2" y1="15" x2="1037.2" y2="25" stroke="#8a8d90" stroke-width="1"/><line x1="1075.6" y1="21" x2="1075.6" y2="25" stroke="#8a8d90" stroke-width="1"/><line x1="1114.0" y1="21" x2="1114.0" y2="25" stroke="#8a8d90" stroke-width="1"/><line x1="1152.4" y1="15" x2="1152.4" y2="25" stroke="#8a8d90" stroke-width="1"/><line x1="1190.8" y1="21" x2="1190.8" y2="25" stroke="#8a8d90" stroke-width="1"/><line x1="1229.2" y1="21" x2="1229.2" y2="25" stroke="#8a8d90" stroke-width="1"/><line x1="1267.6" y1="15" x2="1267.6" y2="25" stroke="#8a8d90" stroke-width="1"/><line x1="1306.0" y1="21" x2="1306.0" y2="25" stroke="#8a8d90" stroke-width="1"/><line x1="1344.4" y1="21" x2="1344.4" y2="25" stroke="#8a8d90" stroke-width="1"/><line x1="0" y1="25.5" x2="1362" y2="25.5" stroke="#3a3d41"/></svg>
<div class="t" style="left:168px;top:578px;font-size:13.3px;color:#d8d8d8;">00:00:00:00</div>
<div class="t" style="left:284px;top:578px;font-size:13.3px;color:#d8d8d8;">00:00:07:04</div>
<div class="t" style="left:399px;top:578px;font-size:13.3px;color:#d8d8d8;">00:00:14:09</div>
<div class="t" style="left:514px;top:578px;font-size:13.3px;color:#d8d8d8;">00:00:21:14</div>
<div class="t" style="left:629px;top:578px;font-size:13.3px;color:#d8d8d8;">00:00:28:19</div>
<div class="t" style="left:744px;top:578px;font-size:13.3px;color:#d8d8d8;">00:00:36:00</div>
<div class="t" style="left:860px;top:578px;font-size:13.3px;color:#d8d8d8;">00:00:43:04</div>
<div class="t" style="left:975px;top:578px;font-size:13.3px;color:#d8d8d8;">00:00:50:10</div>
<div class="t" style="left:1090px;top:578px;font-size:13.3px;color:#d8d8d8;">00:00:57:14</div>
<div class="t" style="left:1205px;top:578px;font-size:13.3px;color:#d8d8d8;">00:01:04:20</div>
<div class="t" style="left:1320px;top:578px;font-size:13.3px;color:#d8d8d8;">00:01:12:00</div>
<div class="t" style="left:1436px;top:578px;font-size:13.3px;color:#d8d8d8;">00:01:19:05</div>
<div class="a" style="left:168px;top:601px;width:48px;height:7px;background:#3b6b8a"></div>
<div class="a" style="left:168px;top:601px;width:2px;height:7px;background:#8fb8d0"></div>
<div class="a" style="left:214px;top:601px;width:2px;height:7px;background:#8fb8d0"></div>
<div class="a" style="left:188px;top:601px;width:8px;height:7px;border:2px solid #a8c8dc"></div>
<div class="a" style="left:0px;top:609px;width:1531px;height:268px;background:#1f2225"></div>
<div class="a" style="left:1px;top:610px;width:166px;height:65px;background:#2e4555"></div>
<div class="a" style="left:169px;top:610px;width:1361px;height:65px;background:#29404e"></div>
<div class="a" style="left:47px;top:610px;width:18px;height:26px;background:#4cd483"></div>
<div class="t" style="left:49px;top:618px;font-size:12.5px;color:#1c3526;">V2</div>
<svg style="left:22px;top:614px;" width="140" height="22" viewBox="0 0 140 22"><path d="M1 3.8 L11.6 14.4 L22 4" fill="none" stroke="#c8c8c8" stroke-width="1"/>
<path d="M63 13.8 L67.5 18 L81 4.6 L76.5 0.2Z" fill="#909396"/><path d="M73.2 5.3 L75 7.2 L78.4 3.8 L76.5 1.9Z" fill="#2e4555"/>
<path d="M65.2 0 L66 1.5 L67.5 2.3 L66 3.1 L65.2 4.6 L64.4 3.1 L62.9 2.3 L64.4 1.5Z" fill="#909396"/>
<rect x="121.2" y="9.7" width="13.8" height="7.6" fill="none" stroke="#fcfcfc" stroke-width="1.5"/><path d="M123.8 5.5 V4.5 Q123.8 0.4 128 0.4 Q132.2 0.4 132.2 4.5 V9.5" fill="none" stroke="#fcfcfc" stroke-width="1.5"/><rect x="91" y="0" width="18" height="18" fill="#fcfcfc"/><rect x="95.8" y="1.5" width="8.7" height="5.7" fill="#2e4555"/><rect x="95.8" y="10.3" width="8.7" height="5.9" fill="#2e4555"/><rect x="92.5" y="3" width="1.6" height="1.6" fill="#2e4555"/><rect x="92.5" y="8" width="1.6" height="1.6" fill="#2e4555"/><rect x="92.5" y="13.3" width="1.6" height="1.6" fill="#2e4555"/><rect x="106" y="3" width="1.6" height="1.6" fill="#2e4555"/><rect x="106" y="8" width="1.6" height="1.6" fill="#2e4555"/><rect x="106" y="13.3" width="1.6" height="1.6" fill="#2e4555"/></svg>
<div class="a" style="left:1px;top:677px;width:166px;height:66px;background:#232629"></div>
<div class="a" style="left:169px;top:677px;width:1361px;height:66px;background:#232629"></div>
<div class="a" style="left:47px;top:677px;width:18px;height:26px;background:#4cd483"></div>
<div class="t" style="left:49px;top:685px;font-size:12.5px;color:#1c3526;">V1</div>
<svg style="left:22px;top:681px;" width="140" height="22" viewBox="0 0 140 22"><path d="M1 3.8 L11.6 14.4 L22 4" fill="none" stroke="#c8c8c8" stroke-width="1"/>
<path d="M63 13.8 L67.5 18 L81 4.6 L76.5 0.2Z" fill="#909396"/><path d="M73.2 5.3 L75 7.2 L78.4 3.8 L76.5 1.9Z" fill="#232629"/>
<path d="M65.2 0 L66 1.5 L67.5 2.3 L66 3.1 L65.2 4.6 L64.4 3.1 L62.9 2.3 L64.4 1.5Z" fill="#909396"/>
<rect x="121.2" y="9.7" width="13.8" height="7.6" fill="none" stroke="#fcfcfc" stroke-width="1.5"/><path d="M123.8 5.5 V4.5 Q123.8 0.4 128 0.4 Q132.2 0.4 132.2 4.5 V9.5" fill="none" stroke="#fcfcfc" stroke-width="1.5"/><rect x="91" y="0" width="18" height="18" fill="#fcfcfc"/><rect x="95.8" y="1.5" width="8.7" height="5.7" fill="#232629"/><rect x="95.8" y="10.3" width="8.7" height="5.9" fill="#232629"/><rect x="92.5" y="3" width="1.6" height="1.6" fill="#232629"/><rect x="92.5" y="8" width="1.6" height="1.6" fill="#232629"/><rect x="92.5" y="13.3" width="1.6" height="1.6" fill="#232629"/><rect x="106" y="3" width="1.6" height="1.6" fill="#232629"/><rect x="106" y="8" width="1.6" height="1.6" fill="#232629"/><rect x="106" y="13.3" width="1.6" height="1.6" fill="#232629"/></svg>
<div class="a" style="left:1px;top:744px;width:166px;height:66px;background:#29262d"></div>
<div class="a" style="left:169px;top:744px;width:1361px;height:66px;background:#29262d"></div>
<div class="a" style="left:47px;top:744px;width:18px;height:26px;background:#4cd483"></div>
<div class="t" style="left:49px;top:752px;font-size:12.5px;color:#1c3526;">A1</div>
<svg style="left:22px;top:748px;" width="140" height="22" viewBox="0 0 140 22"><path d="M1 3.8 L11.6 14.4 L22 4" fill="none" stroke="#c8c8c8" stroke-width="1"/>
<path d="M63 13.8 L67.5 18 L81 4.6 L76.5 0.2Z" fill="#909396"/><path d="M73.2 5.3 L75 7.2 L78.4 3.8 L76.5 1.9Z" fill="#29262d"/>
<path d="M65.2 0 L66 1.5 L67.5 2.3 L66 3.1 L65.2 4.6 L64.4 3.1 L62.9 2.3 L64.4 1.5Z" fill="#909396"/>
<rect x="121.2" y="9.7" width="13.8" height="7.6" fill="none" stroke="#fcfcfc" stroke-width="1.5"/><path d="M123.8 5.5 V4.5 Q123.8 0.4 128 0.4 Q132.2 0.4 132.2 4.5 V9.5" fill="none" stroke="#fcfcfc" stroke-width="1.5"/><path d="M91 5.5 H95 L100.5 0.5 V18 L95 13 H91Z" fill="#fcfcfc"/><path d="M103 4.5 Q106.5 9.2 103 14 M105.5 1.5 Q111 9.2 105.5 17" fill="none" stroke="#fcfcfc" stroke-width="1.5"/></svg>
<div class="a" style="left:1px;top:811px;width:166px;height:66px;background:#29262d"></div>
<div class="a" style="left:169px;top:811px;width:1361px;height:66px;background:#29262d"></div>
<div class="a" style="left:47px;top:811px;width:18px;height:26px;background:#4cd483"></div>
<div class="t" style="left:49px;top:819px;font-size:12.5px;color:#1c3526;">A2</div>
<svg style="left:22px;top:815px;" width="140" height="22" viewBox="0 0 140 22"><path d="M1 3.8 L11.6 14.4 L22 4" fill="none" stroke="#c8c8c8" stroke-width="1"/>
<path d="M63 13.8 L67.5 18 L81 4.6 L76.5 0.2Z" fill="#909396"/><path d="M73.2 5.3 L75 7.2 L78.4 3.8 L76.5 1.9Z" fill="#29262d"/>
<path d="M65.2 0 L66 1.5 L67.5 2.3 L66 3.1 L65.2 4.6 L64.4 3.1 L62.9 2.3 L64.4 1.5Z" fill="#909396"/>
<rect x="121.2" y="9.7" width="13.8" height="7.6" fill="none" stroke="#fcfcfc" stroke-width="1.5"/><path d="M123.8 5.5 V4.5 Q123.8 0.4 128 0.4 Q132.2 0.4 132.2 4.5 V9.5" fill="none" stroke="#fcfcfc" stroke-width="1.5"/><path d="M91 5.5 H95 L100.5 0.5 V18 L95 13 H91Z" fill="#fcfcfc"/><path d="M103 4.5 Q106.5 9.2 103 14 M105.5 1.5 Q111 9.2 105.5 17" fill="none" stroke="#fcfcfc" stroke-width="1.5"/></svg>
<div class="a" style="left:168px;top:609px;width:306px;height:67px;background:#000"></div>
<div class="a" style="left:170px;top:611px;width:189px;height:63px;background:#1664a2"></div>
<div class="a" style="left:170px;top:611px;width:161px;height:16px;background:#144a78"></div>
<div class="a" style="left:170px;top:611px;width:161px;height:16px;overflow:hidden"><div class="t" style="left:2px;top:2px;font-size:13px;color:#fcfcfc">final project sample v11.avi</div></div>
<div class="a" style="left:363px;top:611px;width:44px;height:63px;background:#1664a2"></div>
<div class="a" style="left:363px;top:611px;width:44px;height:16px;background:#144a78"></div>
<div class="a" style="left:363px;top:611px;width:44px;height:16px;overflow:hidden"><div class="t" style="left:2px;top:2px;font-size:13px;color:#fcfcfc">final project sample v12.avi</div></div>
<div class="a" style="left:411px;top:611px;width:61px;height:63px;background:#1664a2"></div>
<div class="a" style="left:411px;top:611px;width:61px;height:16px;background:#144a78"></div>
<div class="a" style="left:411px;top:611px;width:61px;height:16px;overflow:hidden"><div class="t" style="left:2px;top:2px;font-size:13px;color:#fcfcfc">final project sample v13.avi</div></div>
<div class="a" style="left:274px;top:600px;width:1px;height:277px;background:#fcfcfc"></div>
<svg style="left:266px;top:591px;" width="18" height="10" viewBox="0 0 18 10"><path d="M0.5 0.5 H16.5 L8.5 9.5Z" fill="#fcfcfc"/></svg>
<div class="a" style="left:1529px;top:513px;width:3px;height:567px;background:#262a2e"></div>
<div class="a" style="left:168px;top:1034px;width:95px;height:9px;background:#6b6b6b;border-radius:5px"></div>
<div class="a" style="left:1531px;top:513px;width:389px;height:567px;background:#2a2e32"></div>
<div class="a" style="left:1532px;top:513px;width:387px;height:499px;background:#272a2f;border:1px solid #5f6367;border-radius:4px"></div>
<svg style="left:1886px;top:526px;" width="20" height="20" viewBox="0 0 20 20"><g fill="none" stroke="#a0a3a6" stroke-width="1">
<path d="M6.5 5 V1.5 H15.5 L17 3 V11.5 H14.5"/><path d="M8.5 1.5 V4.5 H14 V1.5"/>
<path d="M3.5 16 V5.5 H12 L13.5 7 V16 Z"/><path d="M5.5 5.5 V9.5 H11 V5.5 M5 16 V12 H12 V16"/></g></svg>
<div class="a" style="left:1531px;top:1013px;width:389px;height:29px;background:#1f2225;border-top:1px solid #3b3f43"></div>
<div class="a" style="left:1611px;top:1013px;width:137px;height:29px;background:#2a2e32;border-left:1px solid #3b3f43;border-right:1px solid #3b3f43"></div>
<div class="a" style="left:1611px;top:1039px;width:137px;height:3px;background:#3daee9;border-radius:0 0 2px 2px"></div>
<div class="t" style="left:1541px;top:1023px;font-size:12.8px;color:#fcfcfc;">Audio Mi...</div>
<div class="t" style="left:1620px;top:1023px;font-size:12.8px;color:#fcfcfc;">Effect/Composition...</div>
<div class="t" style="left:1759px;top:1023px;font-size:12.8px;color:#fcfcfc;">Time Rem...</div>
<div class="t" style="left:1855px;top:1023px;font-size:12.8px;color:#fcfcfc;">Subtitles</div>
<div class="t" style="left:1500px;top:1057px;font-size:12.8px;color:#fcfcfc;">Select</div>
<div class="a" style="left:1551px;top:1046px;width:1px;height:32px;background:#4d5155"></div>
<div class="a" style="left:1719px;top:1046px;width:1px;height:32px;background:#4d5155"></div>
<div class="a" style="left:1556px;top:1047px;width:30px;height:30px;background:#3f4347;border:1px solid #55595d;border-radius:3px"></div>
<div class="a" style="left:1620px;top:1047px;width:30px;height:30px;background:#3f4347;border:1px solid #55595d;border-radius:3px"></div>
<div class="a" style="left:1652px;top:1047px;width:30px;height:30px;background:#3f4347;border:1px solid #55595d;border-radius:3px"></div>
<div class="a" style="left:1684px;top:1047px;width:30px;height:30px;background:#3f4347;border:1px solid #55595d;border-radius:3px"></div>
<svg style="left:1556px;top:1047px;" width="364" height="30" viewBox="0 0 364 30">
<path d="M9 9 L13 5.5 L22 10 L18.5 19 L9 13Z" fill="#fcfcfc"/><circle cx="12.5" cy="9" r="1.2" fill="#3f4347"/><path d="M8.5 12 L16 20" stroke="#3f4347" stroke-width="1"/><path d="M8 13 L16 21.5" stroke="#fcfcfc" stroke-width="1.2"/>
<rect x="39.5" y="8" width="15" height="14" fill="#fcfcfc"/><rect x="42.5" y="9.5" width="9" height="4.5" fill="#2a2e32"/><rect x="42.5" y="16" width="9" height="4.5" fill="#2a2e32"/><rect x="40.5" y="9.5" width="1" height="1" fill="#2a2e32"/><rect x="40.5" y="12" width="1" height="1" fill="#2a2e32"/><rect x="40.5" y="14.5" width="1" height="1" fill="#2a2e32"/><rect x="40.5" y="17" width="1" height="1" fill="#2a2e32"/><rect x="40.5" y="19.5" width="1" height="1" fill="#2a2e32"/><rect x="52.5" y="9.5" width="1" height="1" fill="#2a2e32"/><rect x="52.5" y="12" width="1" height="1" fill="#2a2e32"/><rect x="52.5" y="14.5" width="1" height="1" fill="#2a2e32"/><rect x="52.5" y="17" width="1" height="1" fill="#2a2e32"/><rect x="52.5" y="19.5" width="1" height="1" fill="#2a2e32"/>
<path d="M70 15 h2 L73.5 8 L75 15 h1 L80 10 L84 15 L80 20 L76 15 h-1 L73.5 22 L72 15 h-2Z" fill="#fcfcfc"/>
<path d="M104.5 22.5 V8" stroke="#fcfcfc" stroke-width="1.5"/><path d="M105 7.9 L118 13.8 L109.7 16.8 H105Z" fill="#fcfcfc"/>
<path d="M138 20 V14 Q138 9.5 143 9.5 Q148 9.5 148 14 V18" fill="none" stroke="#fcfcfc" stroke-width="2.6"/><rect x="136.5" y="18.5" width="3" height="3" fill="#fcfcfc"/><rect x="146.5" y="19.5" width="3.5" height="3" fill="none" stroke="#3daee9" stroke-width="1"/>
<g fill="none" stroke="#fcfcfc" stroke-width="1.3"><path d="M176.5 10.5 V7.5 H179.5 M189 7.5 H192 V10.5 M192 19.5 V22.5 H189 M179.5 22.5 H176.5 V19.5"/><rect x="180" y="11" width="8.5" height="8"/></g><g fill="#fcfcfc"><circle cx="180" cy="11" r="1"/><circle cx="188.5" cy="11" r="1"/><circle cx="180" cy="19" r="1"/><circle cx="188.5" cy="19" r="1"/></g>
<g fill="none" stroke="#fcfcfc" stroke-width="1.2"><path d="M213 8.5 H222.5 V22.5 H213"/><path d="M208.5 8.5 v14 h3" stroke-dasharray="2 2"/><path d="M218.5 11.5 L212 18 M212 13.5 V18 H216.5"/></g>
<rect x="233" y="12" width="96" height="6" rx="3" fill="#3a3e42" stroke="#4d5155" stroke-width="0.8"/>
<rect x="289" y="12" width="40" height="6" rx="3" fill="#3daee9"/>
<circle cx="289" cy="15" r="8.5" fill="#2f3337" stroke="#6b6f73" stroke-width="1.2"/>
<g fill="none" stroke="#fcfcfc" stroke-width="1.2"><rect x="340" y="7.5" width="15" height="15" stroke-dasharray="2 2"/><rect x="340.5" y="17.5" width="4.5" height="4.5"/><path d="M346.5 15.5 L352 10 M348 10 H352 V14"/></g>
</svg>
<div class="a" style="left:1436px;top:480px;width:58px;height:27px;background:#fdfbd4;border:1px solid #c9c6a0;border-radius:3px"></div>
<div class="t" style="left:1441px;top:486px;font-size:15px;color:#1a1a1a;">Rewind</div>
</body></html>
